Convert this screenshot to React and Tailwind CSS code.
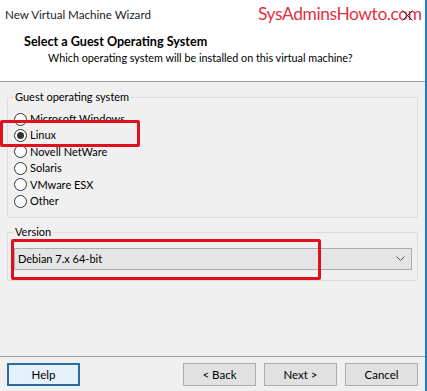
import React from "react";

const font = { fontFamily: 'Lato, "Noto Sans", sans-serif' };

function Radio({ label, checked }) {
  return (
    <div className="flex h-[16.4px] items-center">
      <span className="ml-[6px] flex h-[13px] w-[13px] items-center justify-center rounded-full border border-[#333] bg-white">
        {checked && <span className="h-[7px] w-[7px] rounded-full bg-[#333]" />}
      </span>
      <span className="ml-[3px] text-[11px] text-black">{label}</span>
    </div>
  );
}

function Btn({ children, focused }) {
  return (
    <div
      className={
        "flex h-[23px] w-[73px] items-center justify-center text-[11.5px] text-black " +
        (focused
          ? "border-2 border-[#2a6e9f] bg-[#e5f1fb]"
          : "border border-[#adadad] bg-[#e1e1e1]")
      }
    >
      {children}
    </div>
  );
}

export default function App() {
  return (
    <div className="relative h-[391px] w-[427px] overflow-hidden bg-[#f0f0f0]" style={font}>
      <div className="flex h-full w-[425px] flex-col">
        {/* title bar */}
        <div className="relative flex h-[30px] items-center bg-white pl-[5px]">
          <span className="text-[11.6px] text-[#222]">New Virtual Machine Wizard</span>
          <span className="absolute left-[258px] top-[1px] text-[17.4px] leading-[26px] tracking-[-0.4px] text-[#e2323f]">
            SysAdminsHowto.com
          </span>
          <svg className="absolute left-[402px] top-[10px]" width="11" height="11" viewBox="0 0 11 11">
            <path d="M0.5 0.5 L10.5 10.5 M10.5 0.5 L0.5 10.5" stroke="#222" strokeWidth="1" />
          </svg>
        </div>
        {/* header */}
        <div className="flex h-[51px] flex-col bg-white pl-[24px] pt-[4px]">
          <span className="text-[12.6px] font-bold leading-[16px] text-black">Select a Guest Operating System</span>
          <span className="pl-[24px] text-[10.8px] leading-[16px] text-black">
            Which operating system will be installed on this virtual machine?
          </span>
        </div>
        <div className="h-px bg-[#a0a0a0]" />
        {/* body */}
        <div className="flex flex-1 flex-col px-[7px] pt-[15px]">
          <div className="relative h-[121px] w-[411px] rounded-[2px] border border-[#dcdcdc]">
            <span className="absolute -top-[9px] left-[6px] bg-[#f0f0f0] px-[1px] text-[11px] leading-[16px] text-black">
              Guest operating system
            </span>
            <div className="flex flex-col pt-[13px]">
              <Radio label="Microsoft Windows" />
              <Radio label="Linux" checked />
              <Radio label="Novell NetWare" />
              <Radio label="Solaris" />
              <Radio label="VMware ESX" />
              <Radio label="Other" />
            </div>
          </div>
          <div className="relative mt-[14px] h-[49px] w-[411px] rounded-[2px] border border-[#dcdcdc]">
            <span className="absolute -top-[9px] left-[6px] bg-[#f0f0f0] px-[1px] text-[11px] leading-[16px] text-black">
              Version
            </span>
            <div className="ml-[6px] mt-[15px] flex h-[22px] w-[398px] items-center justify-between border border-[#acacac] bg-[#e5e5e5] pl-[3px] pr-[6px]">
              <span className="text-[11px] text-black">Debian 7.x 64-bit</span>
              <svg width="9" height="6" viewBox="0 0 9 6">
                <path d="M0.5 0.5 L4.5 4.5 L8.5 0.5" stroke="#555" strokeWidth="1" fill="none" />
              </svg>
            </div>
          </div>
        </div>
        {/* footer */}
        <div className="h-px bg-[#a0a0a0]" />
        <div className="flex h-[34px] items-start pl-[7px] pt-[6px]">
          <Btn focused>Help</Btn>
          <div className="ml-auto mr-[7px] flex gap-[8px]">
            <Btn>&lt; Back</Btn>
            <Btn>Next &gt;</Btn>
            <Btn>Cancel</Btn>
          </div>
        </div>
      </div>
      {/* window border right */}
      <div className="absolute right-0 top-0 h-full w-[2px] bg-[#2b79bd]" />
      {/* annotation boxes */}
      <div className="absolute left-0 top-[120px] h-[27px] w-[140px] rounded-[2px] border-[3px] border-[#e0101c]" />
      <div className="absolute left-[11px] top-[239px] h-[41px] w-[310px] rounded-[2px] border-[3px] border-[#e0101c]" />
    </div>
  );
}
